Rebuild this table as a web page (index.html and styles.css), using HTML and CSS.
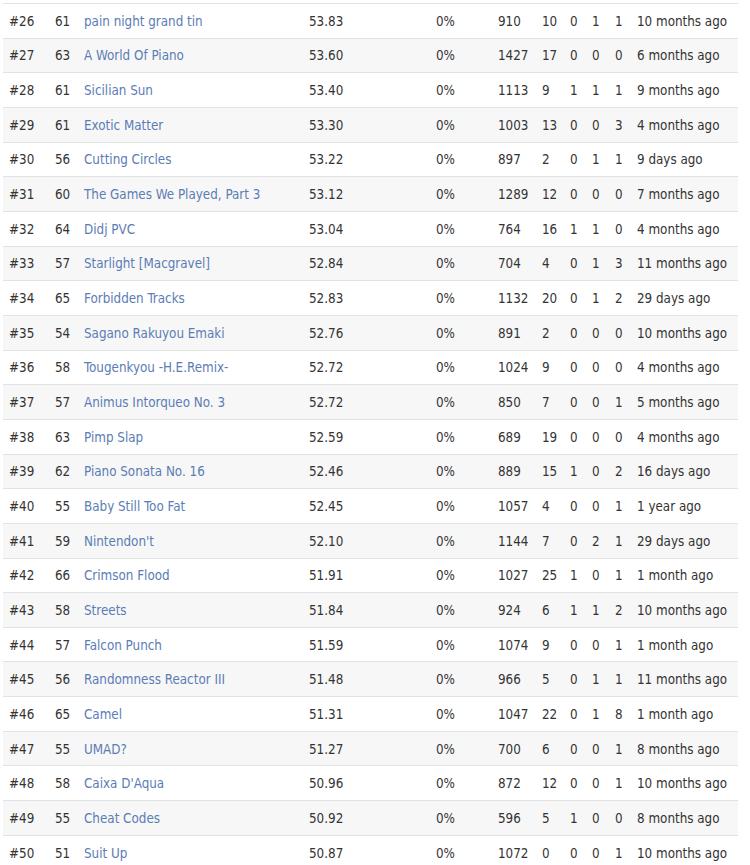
FILE: index.html
```html
<!DOCTYPE html>
<html>
<head>
<meta charset="utf-8">
<link rel="stylesheet" href="styles.css">
</head>
<body>
<table class="ranks">
<colgroup>
<col class="c-rank"><col class="c-lvl"><col class="c-title"><col class="c-score"><col class="c-pct"><col class="c-plays"><col class="c-a"><col class="c-b"><col class="c-c"><col class="c-d"><col class="c-time">
</colgroup>
<tbody>
<tr><td>#26</td><td>61</td><td><a href="#">pain night grand tin</a></td><td>53.83</td><td>0%</td><td>910</td><td>10</td><td>0</td><td>1</td><td>1</td><td>10 months ago</td></tr>
<tr><td>#27</td><td>63</td><td><a href="#">A World Of Piano</a></td><td>53.60</td><td>0%</td><td>1427</td><td>17</td><td>0</td><td>0</td><td>0</td><td>6 months ago</td></tr>
<tr><td>#28</td><td>61</td><td><a href="#">Sicilian Sun</a></td><td>53.40</td><td>0%</td><td>1113</td><td>9</td><td>1</td><td>1</td><td>1</td><td>9 months ago</td></tr>
<tr><td>#29</td><td>61</td><td><a href="#">Exotic Matter</a></td><td>53.30</td><td>0%</td><td>1003</td><td>13</td><td>0</td><td>0</td><td>3</td><td>4 months ago</td></tr>
<tr><td>#30</td><td>56</td><td><a href="#">Cutting Circles</a></td><td>53.22</td><td>0%</td><td>897</td><td>2</td><td>0</td><td>1</td><td>1</td><td>9 days ago</td></tr>
<tr><td>#31</td><td>60</td><td><a href="#">The Games We Played, Part 3</a></td><td>53.12</td><td>0%</td><td>1289</td><td>12</td><td>0</td><td>0</td><td>0</td><td>7 months ago</td></tr>
<tr><td>#32</td><td>64</td><td><a href="#">Didj PVC</a></td><td>53.04</td><td>0%</td><td>764</td><td>16</td><td>1</td><td>1</td><td>0</td><td>4 months ago</td></tr>
<tr><td>#33</td><td>57</td><td><a href="#">Starlight [Macgravel]</a></td><td>52.84</td><td>0%</td><td>704</td><td>4</td><td>0</td><td>1</td><td>3</td><td>11 months ago</td></tr>
<tr><td>#34</td><td>65</td><td><a href="#">Forbidden Tracks</a></td><td>52.83</td><td>0%</td><td>1132</td><td>20</td><td>0</td><td>1</td><td>2</td><td>29 days ago</td></tr>
<tr><td>#35</td><td>54</td><td><a href="#">Sagano Rakuyou Emaki</a></td><td>52.76</td><td>0%</td><td>891</td><td>2</td><td>0</td><td>0</td><td>0</td><td>10 months ago</td></tr>
<tr><td>#36</td><td>58</td><td><a href="#">Tougenkyou -H.E.Remix-</a></td><td>52.72</td><td>0%</td><td>1024</td><td>9</td><td>0</td><td>0</td><td>0</td><td>4 months ago</td></tr>
<tr><td>#37</td><td>57</td><td><a href="#">Animus Intorqueo No. 3</a></td><td>52.72</td><td>0%</td><td>850</td><td>7</td><td>0</td><td>0</td><td>1</td><td>5 months ago</td></tr>
<tr><td>#38</td><td>63</td><td><a href="#">Pimp Slap</a></td><td>52.59</td><td>0%</td><td>689</td><td>19</td><td>0</td><td>0</td><td>0</td><td>4 months ago</td></tr>
<tr><td>#39</td><td>62</td><td><a href="#">Piano Sonata No. 16</a></td><td>52.46</td><td>0%</td><td>889</td><td>15</td><td>1</td><td>0</td><td>2</td><td>16 days ago</td></tr>
<tr><td>#40</td><td>55</td><td><a href="#">Baby Still Too Fat</a></td><td>52.45</td><td>0%</td><td>1057</td><td>4</td><td>0</td><td>0</td><td>1</td><td>1 year ago</td></tr>
<tr><td>#41</td><td>59</td><td><a href="#">Nintendon't</a></td><td>52.10</td><td>0%</td><td>1144</td><td>7</td><td>0</td><td>2</td><td>1</td><td>29 days ago</td></tr>
<tr><td>#42</td><td>66</td><td><a href="#">Crimson Flood</a></td><td>51.91</td><td>0%</td><td>1027</td><td>25</td><td>1</td><td>0</td><td>1</td><td>1 month ago</td></tr>
<tr><td>#43</td><td>58</td><td><a href="#">Streets</a></td><td>51.84</td><td>0%</td><td>924</td><td>6</td><td>1</td><td>1</td><td>2</td><td>10 months ago</td></tr>
<tr><td>#44</td><td>57</td><td><a href="#">Falcon Punch</a></td><td>51.59</td><td>0%</td><td>1074</td><td>9</td><td>0</td><td>0</td><td>1</td><td>1 month ago</td></tr>
<tr><td>#45</td><td>56</td><td><a href="#">Randomness Reactor III</a></td><td>51.48</td><td>0%</td><td>966</td><td>5</td><td>0</td><td>1</td><td>1</td><td>11 months ago</td></tr>
<tr><td>#46</td><td>65</td><td><a href="#">Camel</a></td><td>51.31</td><td>0%</td><td>1047</td><td>22</td><td>0</td><td>1</td><td>8</td><td>1 month ago</td></tr>
<tr><td>#47</td><td>55</td><td><a href="#">UMAD?</a></td><td>51.27</td><td>0%</td><td>700</td><td>6</td><td>0</td><td>0</td><td>1</td><td>8 months ago</td></tr>
<tr><td>#48</td><td>58</td><td><a href="#">Caixa D'Aqua</a></td><td>50.96</td><td>0%</td><td>872</td><td>12</td><td>0</td><td>0</td><td>1</td><td>10 months ago</td></tr>
<tr><td>#49</td><td>55</td><td><a href="#">Cheat Codes</a></td><td>50.92</td><td>0%</td><td>596</td><td>5</td><td>1</td><td>0</td><td>0</td><td>8 months ago</td></tr>
<tr><td>#50</td><td>51</td><td><a href="#">Suit Up</a></td><td>50.87</td><td>0%</td><td>1072</td><td>0</td><td>0</td><td>0</td><td>1</td><td>10 months ago</td></tr>
</tbody>
</table>
</body>
</html>
```
FILE: styles.css
```css
html, body {
  margin: 0;
  padding: 0;
  background: #fff;
}
body {
  padding: 3px 12px 0 3px;
  font-family: "DejaVu Sans Condensed", "DejaVu Sans", sans-serif;
  font-size: 13.3px;
  color: #333;
}
.ranks {
  width: 735px;
  table-layout: fixed;
  border-collapse: collapse;
  border-spacing: 0;
}
.c-rank { width: 46px; }
.c-lvl { width: 29px; }
.c-title { width: 225px; }
.c-score { width: 127px; }
.c-pct { width: 62px; }
.c-plays { width: 44px; }
.c-a { width: 28px; }
.c-b { width: 22px; }
.c-c { width: 23px; }
.c-d { width: 22px; }
.c-time { width: 107px; }
.ranks tr {
  height: 34.67px;
}
.ranks tr:nth-child(even) td {
  background: #f7f7f7;
}
.ranks td {
  padding: 1px 0 0 6px;
  border-top: 1px solid #e2e2e2;
  vertical-align: middle;
  white-space: nowrap;
  overflow: hidden;
}
.ranks a {
  color: #5b7db5;
  text-decoration: none;
}
```
